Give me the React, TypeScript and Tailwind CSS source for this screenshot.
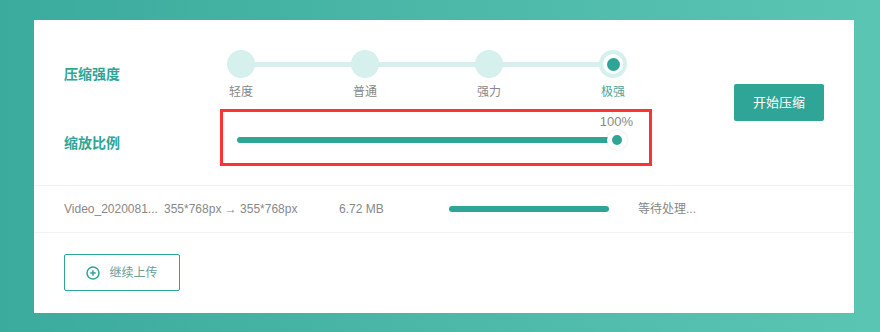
import { Fragment } from 'react'

const steps = ['轻度', '普通', '强力', '极强']

function PlusCircle() {
  return (
    <svg width="14" height="14" viewBox="0 0 14 14" fill="none">
      <circle cx="7" cy="7" r="6" stroke="#2ea597" strokeWidth="1.5" />
      <path d="M7 4.2v5.6M4.2 7h5.6" stroke="#2ea597" strokeWidth="1.5" />
    </svg>
  )
}

export default function App() {
  return (
    <div className="w-[880px] h-[332px] pt-[20px] pl-[34px] bg-linear-to-r from-[#3aab9d] to-[#5bc5b3]"
         style={{ fontFamily: '"Liberation Sans", "Noto Sans CJK SC", sans-serif' }}>
      <div className="w-[820px] h-[293px] bg-white">
        {/* Settings */}
        <div className="h-[166px] border-b border-[#f2f2f2] flex items-center pl-[30px]">
          <div className="w-[588px] flex flex-col pt-[30px] self-start">
            <div className="flex items-center h-[48px]">
              <p className="w-[156px] text-[14px] leading-[20px] font-bold text-[#2ea597]">压缩强度</p>
              <div className="relative ml-[7px] w-[400px] self-start flex justify-between">
                <div className="absolute left-[14px] right-[14px] top-[12px] h-[5px] bg-[#d6f0ed]" />
                {steps.map((s, i) => (
                  <Fragment key={s}>
                    <div className="relative flex flex-col items-center w-[28px]">
                      {i === 3 ? (
                        <div className="w-[28px] h-[28px] rounded-full bg-[#d6f0ed] flex items-center justify-center">
                          <div className="w-[20px] h-[20px] rounded-full bg-white flex items-center justify-center">
                            <div className="w-[13px] h-[13px] rounded-full bg-[#2ea597]" />
                          </div>
                        </div>
                      ) : (
                        <div className="w-[28px] h-[28px] rounded-full bg-[#d6f0ed]" />
                      )}
                      <span className={`mt-[6px] whitespace-nowrap text-[12px] leading-[16px] ${i === 3 ? 'text-[#4fa39a]' : 'text-[#888]'}`}>{s}</span>
                    </div>
                  </Fragment>
                ))}
              </div>
            </div>

            <div className="flex items-start mt-[11px]">
              <p className="w-[156px] mt-[24px] text-[14px] leading-[20px] font-bold text-[#2ea597]">缩放比例</p>
              <div className="w-[432px] h-[57px] border-[3px] border-[#ff3333] flex flex-col">
                <p className="pt-[2px] pr-[16px] text-right text-[13px] leading-[16px] text-[#888]">100%</p>
                <div className="flex items-center h-[20px] pl-[14px]">
                  <div className="w-[375px] h-[6px] rounded-full bg-[#2ea597]" />
                  <div className="-ml-[5px] w-[20px] h-[20px] rounded-full bg-white shadow-[0_0_3px_rgba(0,0,0,0.12)] flex items-center justify-center">
                    <div className="w-[10px] h-[10px] rounded-full bg-[#2ea597]" />
                  </div>
                </div>
              </div>
            </div>
          </div>

          <button className="ml-[82px] w-[90px] h-[37px] rounded-[2px] bg-[#2ea597] text-white text-[13px]">开始压缩</button>
        </div>

        {/* File row */}
        <div className="h-[47px] border-b border-[#f2f2f2] flex items-center pl-[30px] text-[12px] text-[#888]">
          <span className="w-[100px] whitespace-nowrap">Video_2020081...</span>
          <span className="w-[175px] whitespace-nowrap">355*768px → 355*768px</span>
          <span className="w-[110px] whitespace-nowrap">6.72 MB</span>
          <div className="w-[160px] h-[6px] rounded-full bg-[#2ea597]" />
          <span className="ml-[29px] whitespace-nowrap">等待处理...</span>
        </div>

        {/* Upload more */}
        <div className="pl-[30px] pt-[21px]">
          <button className="w-[116px] h-[37px] rounded-[2px] border border-[#2ea597] flex items-center justify-center gap-[9px]">
            <PlusCircle />
            <span className="text-[12px] text-[#6b9e97]">继续上传</span>
          </button>
        </div>
      </div>
    </div>
  )
}
